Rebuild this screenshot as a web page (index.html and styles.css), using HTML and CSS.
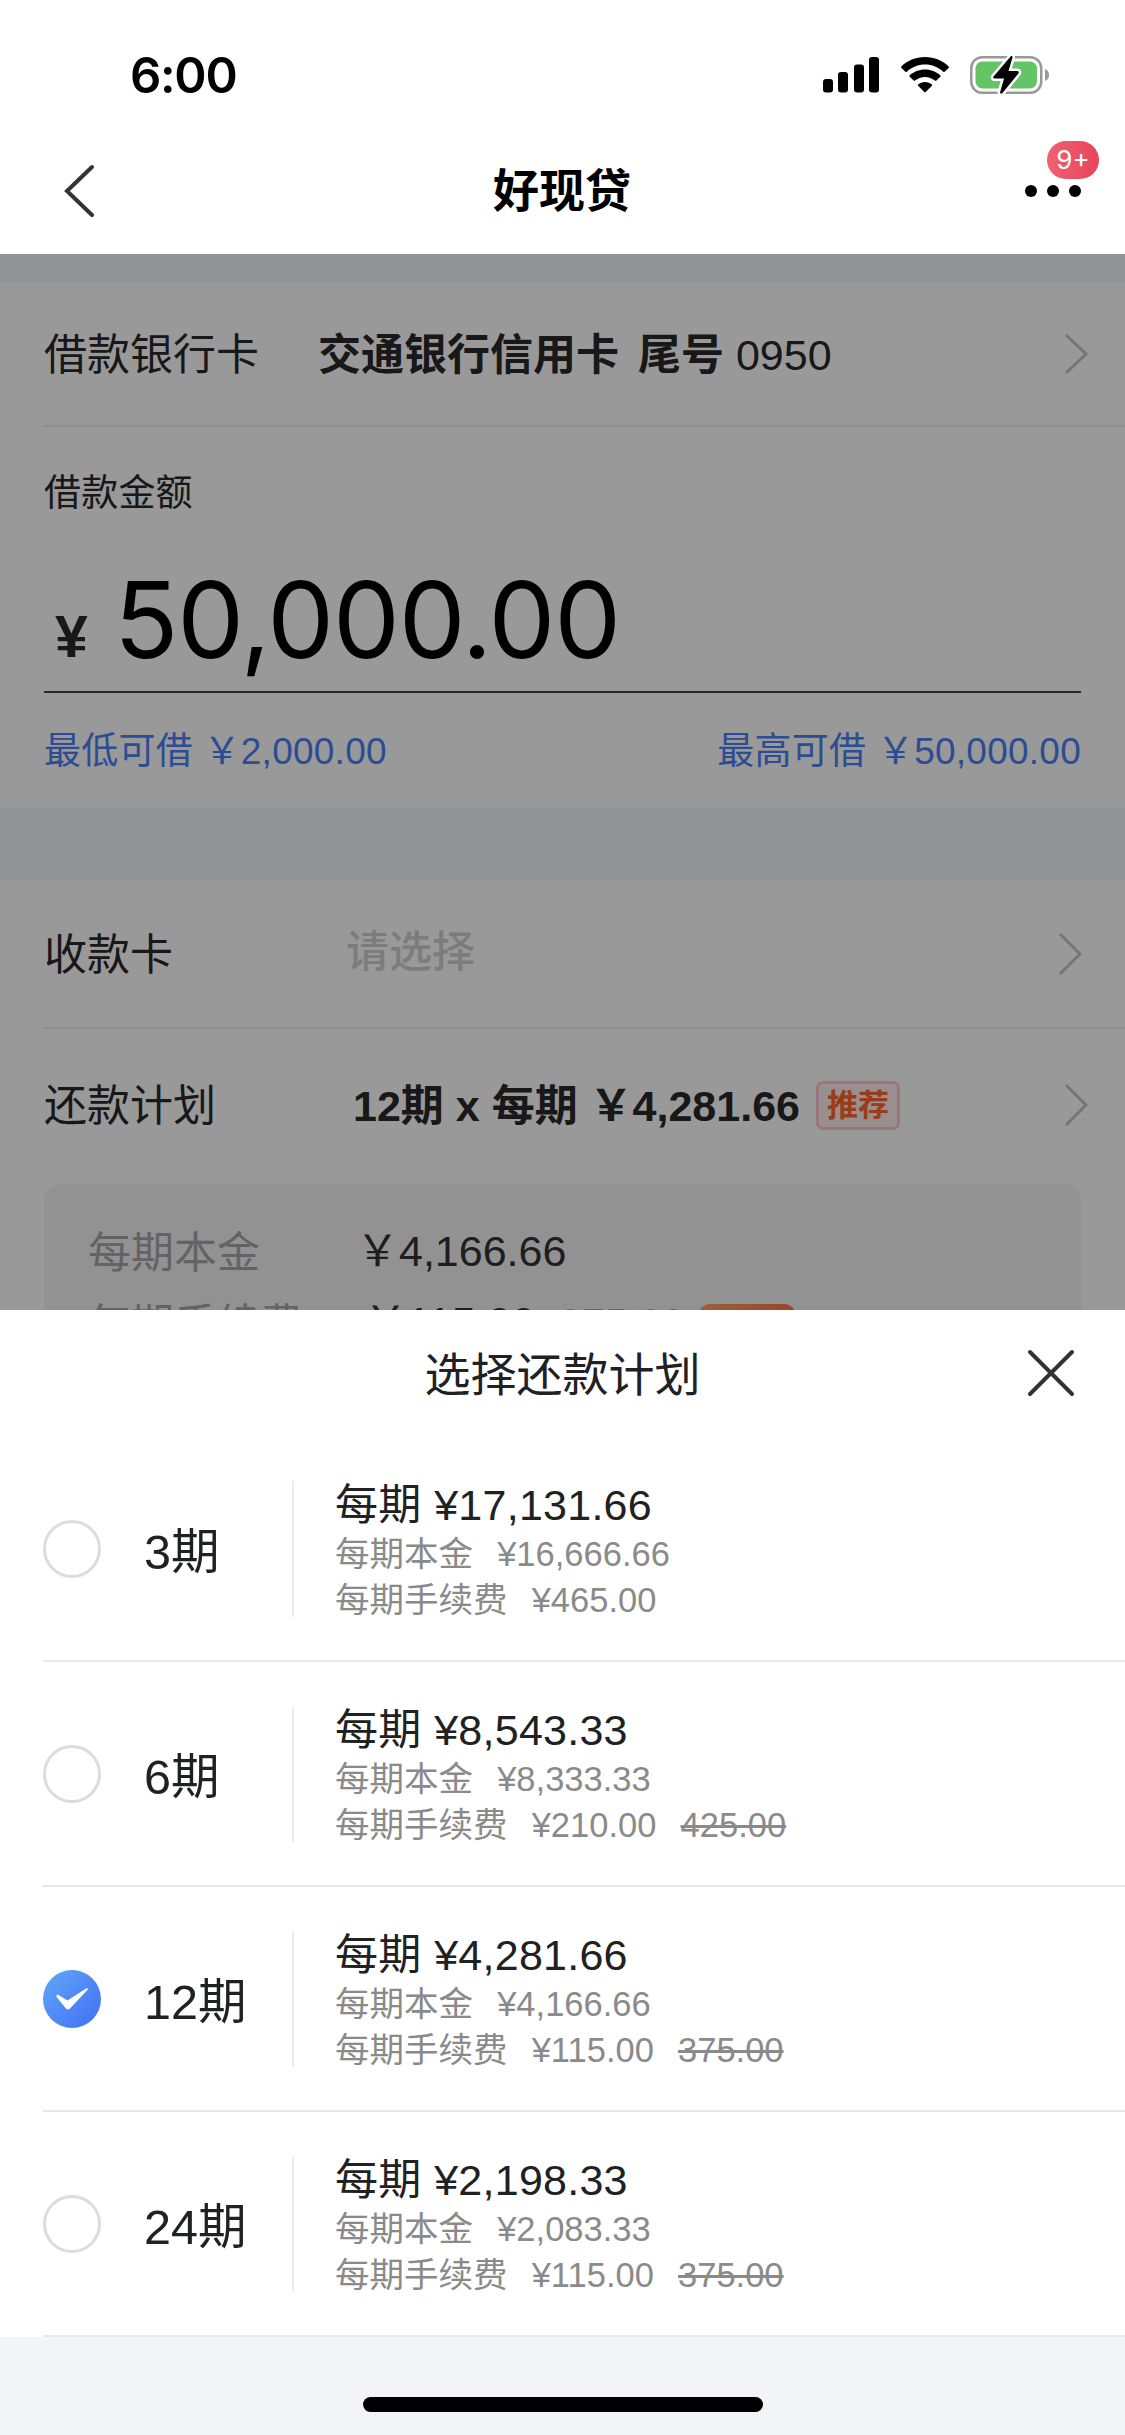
FILE: index.html
```html
<!DOCTYPE html>
<html lang="zh-CN">
<head>
<meta charset="utf-8">
<title>好现贷</title>
<link rel="stylesheet" href="styles.css">
</head>
<body>
<header class="top">
  <div class="status">
    <span class="clock">6:00</span>
    <div class="status-icons">
      <svg class="signal" width="56" height="36" viewBox="0 0 56 36"><rect x="0" y="22" width="10" height="13.500" rx="3"/><rect x="15" y="15" width="10" height="20.500" rx="3"/><rect x="31" y="7.500" width="10" height="28" rx="3"/><rect x="46" y="0" width="10" height="35.500" rx="3"/></svg>
      <svg class="wifi" width="48" height="36" viewBox="0 0 48 36"><path d="M24 0C33.500 0 41.800 3.600 47.600 9.400Q48.300 10.200 47.600 11L43.600 14.800Q42.900 15.400 42.200 14.800C37.400 10.200 31 7.600 24 7.600S10.600 10.200 5.800 14.800Q5.100 15.400 4.400 14.800L.4 11Q-.3 10.200.4 9.400C6.200 3.600 14.500 0 24 0Z"/><path d="M24 12.400C30 12.400 35.400 14.700 39.300 18.300Q40 19 39.300 19.700L35.400 23.600Q34.700 24.200 34 23.600C31.300 21.300 27.800 19.900 24 19.900S16.700 21.300 14 23.600Q13.300 24.200 12.600 23.600L8.700 19.700Q8 19 8.700 18.300C12.600 14.700 18 12.400 24 12.400Z"/><path d="M24 25C26.700 25 29 25.900 30.900 27.400Q31.600 28.100 30.900 28.800L24.700 35Q24 35.600 23.300 35L17.100 28.800Q16.400 28.100 17.100 27.400C19 25.900 21.300 25 24 25Z"/></svg>
      <svg class="battery" width="80" height="40" viewBox="0 0 80 40"><rect x="1.250" y="2.250" width="70" height="35.500" rx="11" fill="none" stroke="#999" stroke-width="2.500"/><rect x="5.500" y="6.500" width="61.500" height="27" rx="7" fill="#65c466"/><path d="M75 14c2.700 1 4 3.200 4 6s-1.300 5-4 6Z" fill="#999"/><path d="M41 1L23.500 21.500Q22.500 23.500 25 23.500H34L30 37.500Q30.500 39.500 32.500 38L48.500 18.500Q49.500 16 47 16H38.500L42.500 2.500Q42.500 0 41 1Z" fill="#000" stroke="#fff" stroke-width="5" stroke-linejoin="round" paint-order="stroke"/></svg>
    </div>
  </div>
  <nav class="nav">
    <svg class="back" width="32" height="54" viewBox="0 0 32 54"><path d="M29 3L4 27L29 51" fill="none" stroke="#333" stroke-width="4" stroke-linecap="round"/></svg>
    <h1 class="title">好现贷</h1>
    <div class="more">
      <i class="dot"></i><i class="dot"></i><i class="dot"></i>
      <span class="count">9+</span>
    </div>
  </nav>
</header>

<main class="loan">
  <section class="card">
    <div class="row row-bank">
      <span class="label">借款银行卡</span>
      <span class="bank"><b>交通银行信用卡</b><b>尾号</b> 0950</span>
      <svg class="arrow" width="24" height="42" viewBox="0 0 24 42"><path d="M2 2L22 21L2 40"/></svg>
    </div>
    <div class="amount">
      <div class="amount-label">借款金额</div>
      <div class="amount-value"><span class="yen">¥</span><span class="figure">50,000.00</span></div>
      <div class="limits"><span>最低可借 ￥2,000.00</span><span>最高可借 ￥50,000.00</span></div>
    </div>
  </section>
  <section class="card card-plan">
    <div class="row row-payee">
      <span class="label">收款卡</span>
      <span class="placeholder">请选择</span>
      <svg class="arrow" width="24" height="44" viewBox="0 0 24 44"><path d="M2 2L22 22L2 42"/></svg>
    </div>
    <div class="row row-plan">
      <span class="label">还款计划</span>
      <b class="plan">12期 x 每期 ￥4,281.66</b>
      <span class="tag">推荐</span>
      <svg class="arrow" width="24" height="44" viewBox="0 0 24 44"><path d="M2 2L22 22L2 42"/></svg>
    </div>
    <div class="detail">
      <div class="detail-row"><span class="detail-label">每期本金</span><span class="detail-value">￥4,166.66</span></div>
      <div class="detail-row"><span class="detail-label">每期手续费</span><span class="detail-value fee">￥115.00</span><span class="was">375.00</span><span class="promo"></span></div>
    </div>
  </section>
</main>

<section class="sheet">
  <div class="sheet-head">
    <h2 class="sheet-title">选择还款计划</h2>
    <svg class="close" width="50" height="50" viewBox="0 0 50 50"><path d="M4 3L46 45M46 3L4 45" stroke="#333" stroke-width="4" stroke-linecap="round"/></svg>
  </div>
  <ul class="options">
    <li class="option">
      <i class="radio"></i><span class="term">3期</span>
      <div class="info"><div class="total">每期 ¥17,131.66</div><div class="line"><span>每期本金</span><span>¥16,666.66</span></div><div class="line"><span>每期手续费</span><span>¥465.00</span></div></div>
    </li>
    <li class="option">
      <i class="radio"></i><span class="term">6期</span>
      <div class="info"><div class="total">每期 ¥8,543.33</div><div class="line"><span>每期本金</span><span>¥8,333.33</span></div><div class="line"><span>每期手续费</span><span>¥210.00</span><s>425.00</s></div></div>
    </li>
    <li class="option">
      <svg class="checked" width="58" height="58" viewBox="0 0 58 58"><defs><linearGradient id="blue" x1="0" y1="0" x2="1" y2="1"><stop offset=".1" stop-color="#5da2f8"/><stop offset=".9" stop-color="#4573f5"/></linearGradient></defs><circle cx="29" cy="29" r="29" fill="url(#blue)"/><path d="M13.500 25.500Q14 24 15.500 25L24.500 30.500L43 18.500Q45.500 17.500 44.800 19.500L27 38.500Q25 40.500 23 38.500L14 27.500Q13 26.500 13.500 25.500Z" fill="#fff"/></svg><span class="term">12期</span>
      <div class="info"><div class="total">每期 ¥4,281.66</div><div class="line"><span>每期本金</span><span>¥4,166.66</span></div><div class="line"><span>每期手续费</span><span>¥115.00</span><s>375.00</s></div></div>
    </li>
    <li class="option">
      <i class="radio"></i><span class="term">24期</span>
      <div class="info"><div class="total">每期 ¥2,198.33</div><div class="line"><span>每期本金</span><span>¥2,083.33</span></div><div class="line"><span>每期手续费</span><span>¥115.00</span><s>375.00</s></div></div>
    </li>
  </ul>
</section>
<footer class="home"><i class="home-bar"></i></footer>
</body>
</html>
```
FILE: styles.css
```css
* { box-sizing: border-box; }
body {
  margin: 0;
  width: 1125px;
  height: 2435px;
  display: flex;
  flex-direction: column;
  overflow: hidden;
  background: #f2f4f7;
  color: #202122;
  font: 43px/60px "Liberation Sans", "Noto Sans CJK SC", sans-serif;
}
h1, h2, ul { margin: 0; padding: 0; font-weight: 400; }
svg { display: block; flex: none; }
span, b, s { white-space: nowrap; }

/* status bar and navigation */
.top { height: 254px; background: #fff; flex: none; }
.status { height: 132px; padding: 45px 75px 0 130px; display: flex; justify-content: space-between; }
.clock { font: 600 49px/60px Inter, sans-serif; color: #000; letter-spacing: -1.3px; padding-top: 1px; }
.status-icons { display: flex; height: 60px; align-items: center; }
.wifi { margin-left: 22px; }
.battery { margin-left: 21px; }
.nav { height: 118px; padding: 0 44px 0 63px; display: flex; align-items: center; justify-content: space-between; }
.title { font-size: 46px; font-weight: 700; color: #000; padding-left: 4px; }
.more { position: relative; display: flex; gap: 10px; }
.dot { width: 12px; height: 12px; border-radius: 50%; background: #000; }
.count {
  position: absolute; left: 22px; top: -44px; width: 52px; height: 38px; border-radius: 19px;
  background: linear-gradient(90deg, #ef6271, #e8435a);
  color: #fff; font: 26px/38px Inter, sans-serif; text-align: center;
}

/* dimmed loan form */
.loan { position: relative; height: 1056px; padding-top: 28px; overflow: hidden; flex: none; background: #f3f5f8; }
.loan::after { content: ""; position: absolute; inset: 0; background: rgba(0, 0, 0, .4); }
.card { background: #fff; height: 526px; color: #292929; }
.card-plan { margin-top: 72px; }
.row { display: flex; align-items: center; margin-left: 44px; border-bottom: 2px solid #ebebeb; }
.row > span, .row > b { padding-top: 2px; }
.row-bank { height: 145px; padding-right: 37px; }
.row-bank .label { width: 274px; }
.bank b + b { margin-left: 19px; }
.arrow { margin-left: auto; fill: none; stroke: #c4c4c4; stroke-width: 3; }
.amount { padding: 37px 44px 0; }
.amount-label { font-size: 37px; letter-spacing: .2px; }
.amount-value { height: 169px; display: flex; align-items: flex-end; border-bottom: 2px solid #454545; padding-left: 8px; }
.yen { width: 62px; font-size: 59px; font-weight: 700; line-height: 70px; margin-bottom: 19px; padding-left: 3px; }
.figure { font: 400 106px/130px Inter, sans-serif; letter-spacing: -1.1px; color: #000; margin-bottom: 6px; }
.limits { display: flex; justify-content: space-between; padding-top: 29px; color: #4b80f5; font-size: 37px; letter-spacing: .25px; }
.row-payee { height: 149px; padding-right: 43px; }
.row-payee .label { width: 302px; }
.row-payee .placeholder { color: #cfcfcf; font-weight: 500; padding: 0 0 4px; }
.row-plan { height: 152px; margin-bottom: 3px; border: 0; padding-right: 37px; }
.row-plan .label { width: 309px; }
.row-plan .tag {
  margin-left: 16px; width: 84px; height: 49px; border: 3px solid #ffc5ca; border-radius: 7px; background: #ffeeed; padding: 0;
  color: #ff6430; font-size: 31px; font-weight: 700; line-height: 43px; text-align: center;
}
.detail { margin: 0 44px; padding: 33px 44px; height: 260px; border-radius: 16px; background: #f3f3f6; }
.detail-row { display: flex; height: 72px; line-height: 72px; }
.detail-label { width: 268px; color: #a5a5a5; }
.detail-value { color: #333; line-height: 69px; }
.detail-value.fee { margin-left: 8px; line-height: 67px; }
.was { margin-left: 24px; color: #aaa; font-size: 41px; line-height: 68px; text-decoration: line-through; }
.promo { margin: 15px 0 0 13px; width: 98px; height: 46px; border-radius: 12px; background: linear-gradient(90deg, #ffa36a, #ff7349); }

/* repayment plan sheet */
.sheet { background: #fff; height: 1027px; flex: none; }
.sheet-head { height: 127px; padding: 0 49px 0 99px; display: flex; align-items: center; }
.sheet-title { flex: 1; text-align: center; font-size: 46px; padding-top: 2px; }
.options { list-style: none; }
.option { height: 225px; margin-left: 43px; border-bottom: 2px solid #e7e8e9; display: flex; align-items: center; }
.radio { width: 58px; height: 58px; border: 3px solid #dcdcdc; border-radius: 50%; flex: none; }
.term { font-size: 48.500px; width: 191px; padding-left: 43px; padding-top: 6px; }
.info { height: 136px; border-left: 2px solid #ececec; padding-left: 41px; }
.total { line-height: 48px; letter-spacing: .25px; word-spacing: .5px; margin-bottom: 2px; }
.line { display: flex; font-size: 34.500px; line-height: 46px; color: #8a8a8a; gap: 24.200px; }

/* home indicator */
.home { flex: 1; display: flex; justify-content: center; padding-top: 60px; }
.home-bar { width: 400px; height: 15px; border-radius: 8px; background: #000; }
```
